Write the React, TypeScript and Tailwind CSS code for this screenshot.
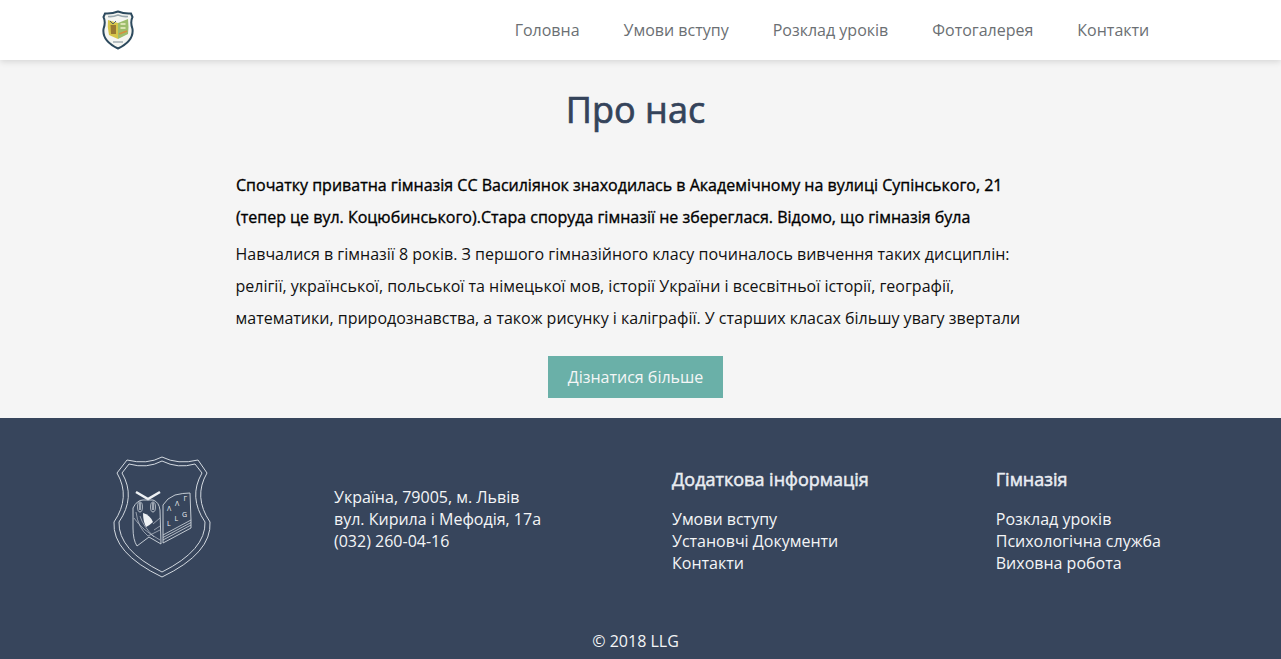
const navItems = ["Головна", "Умови вступу", "Розклад уроків", "Фотогалерея", "Контакти"]

// letters on the open book of the crest, each one sits a bit higher than the last
const bookLetters = [
    { c: "Λ", x: 67, y: 61 },
    { c: "Λ", x: 75, y: 56 },
    { c: "Γ", x: 83.5, y: 51 },
    { c: "L", x: 67, y: 76 },
    { c: "L", x: 74.5, y: 71 },
    { c: "G", x: 82, y: 67 },
]

const SmallLogo = () => (
    <svg width="32" height="40" viewBox="0 0 32 40" className="shrink-0">
        <path d="M3 3.5 Q10 4 16 1.5 Q22 4 29 3.5 L30.5 7 Q28 12 30.5 19 Q32 31 16 38.5 Q0 31 1.5 19 Q4 12 1.5 7 Z" fill="#f5f6f2" stroke="#2d4a5e" strokeWidth="2" />
        <path d="M6 6.5 Q11 7 16 5 Q21 7 26 6.5" fill="none" stroke="#9aa8ae" strokeWidth="1.6" />
        <path d="M6 10 L16 13 L16 29 L7 25 Q5 17 6 10 Z" fill="#d6c64a" />
        <path d="M16 13 L26 9 Q27 17 26 24 L16 29 Z" fill="#9dbd6c" />
        <path d="M8 11 L11 14 L14 11" fill="none" stroke="#53606a" strokeWidth="1" />
        <path d="M8.5 15 h5.5 v9 h-5 z" fill="#9a7a32" />
        <path d="M18.5 14 h5 M18.5 18 h5" stroke="#eef0c8" strokeWidth="1.5" />
        <path d="M17 24 L25 21" stroke="#d88f3e" strokeWidth="1.4" />
        <path d="M11 32 h10" stroke="#8d9aa2" strokeWidth="1.2" />
    </svg>
)

const FooterLogo = () => (
    <svg width="125" height="135" viewBox="0 0 125 135" fill="none" stroke="#d3d9e0" strokeWidth="1" className="shrink-0">
        <path d="M17 23 L27 10 Q47 15 62 7 Q78 15 98 10 L107 23 Q93 47 110 72 Q112 103 62 127 Q12 103 14 72 Q31 47 17 23 Z" />
        <path d="M22 23 L29 14 Q47 19 62 11 Q78 19 95 14 L102 23 Q88 47 105 72 Q106 100 62 122 Q18 100 19 72 Q36 47 22 23 Z" />
        <path d="M36 42 L48 49 L60 42" stroke="#eef1f4" strokeWidth="2.6" />
        <path d="M33 58 Q37 50 43 50 L53 50 Q59 52 60 60 L61 94 L49 87 L37 96 Q33 90 33 78 Z" strokeWidth="0.9" />
        <ellipse cx="40" cy="57" rx="2.4" ry="5" strokeWidth="0.8" />
        <ellipse cx="53" cy="57" rx="2.4" ry="5" strokeWidth="0.8" />
        <path d="M40 53 L40 60 M53 53 L53 60" strokeWidth="1.3" />
        <path d="M43 63 Q50 65 53 72 Q50 75 46 77 Q43 71 43 63 Z" fill="#eef1f4" stroke="none" />
        <path d="M34 68 Q42 80 60 90 M36 62 Q38 78 48 86 M40 66 Q43 76 54 87 M53 74 L60 68 M54 80 L60 76 M48 86 L60 80" strokeWidth="0.6" />
        <path d="M63 55 Q67 48 75 45 Q83 43 90 43 L91 70 L91 78 L63 93 Z" strokeWidth="0.9" />
        <path d="M63 85 L91 70 M63 87.5 L91 72.5 M63 90 L91 75" strokeWidth="0.8" />
        <g fill="#eef1f4" stroke="none" fontFamily="'Open Sans', sans-serif" fontSize="7">
            {bookLetters.map((l, i) => <text key={i} x={l.x} y={l.y}>{l.c}</text>)}
        </g>
    </svg>
)

const FooterColumn = ({ title, links, className }: { title: string, links: string[], className: string }) => (
    <div className={className}>
        <h4 className="text-[18px] leading-[24px] font-normal [-webkit-text-stroke:0.5px_#e9edf2] text-[#e9edf2] mb-[17px]">{title}</h4>
        <div className="flex flex-col text-[#f4f5f7]">
            {links.map(link => <a key={link}>{link}</a>)}
        </div>
    </div>
)

const App = () => {
    return (
        <div className="min-h-[659px] bg-[#f5f5f5] font-['Open_Sans',sans-serif] text-[16px] overflow-hidden">
            <header className="flex items-center justify-between h-[60px] bg-white shadow-[0_2px_6px_rgba(0,0,0,0.12)] pl-[102px] pr-[131.75px] relative">
                <SmallLogo />
                <nav className="flex gap-[44px] text-[#6b6f73]">
                    {navItems.map(item => <a key={item}>{item}</a>)}
                </nav>
            </header>

            <section className="flex flex-col items-center h-[358px] pr-[10px]">
                <h2 className="mt-[26px] text-[36px] leading-[48px] font-normal [-webkit-text-stroke:0.7px_#34435a] text-[#34435a]">Про нас</h2>
                <div className="self-start w-[809px] mt-[35px] ml-[236px] text-black leading-[32px]">
                    <p className="font-normal [-webkit-text-stroke:0.35px_#000] mb-[5px]">
                        Спочатку приватна гімназія СС Василіянок знаходилась в Академічному на вулиці Супінського, 21 (тепер це вул. Коцюбинського).Стара споруда гімназії не збереглася. Відомо, що гімназія була
                    </p>
                    <p className="text-[#111] ml-[-0.5px]">
                        Навчалися в гімназії 8 років. З першого гімназійного класу починалось вивчення таких дисциплін: релігії, української, польської та німецької мов, історії України і всесвітньої історії, географії, математики, природознавства, а також рисунку і каліграфії. У старших класах більшу увагу звертали
                    </p>
                </div>
                <button className="mt-[22px] w-[175px] h-[42px] bg-[#6ab0a8] text-[#f4f6f6]">Дізнатися більше</button>
            </section>

            <footer className="h-[241px] bg-[#37455c] text-[#f4f5f7] leading-[22px]">
                <div className="flex h-[200px]">
                    <div className="ml-[100px] mt-[32px] w-[234px]">
                        <FooterLogo />
                    </div>
                    <div className="w-[338px] mt-[68px]">
                        <p>Україна, 79005, м. Львів</p>
                        <p>вул. Кирила і Мефодія, 17а</p>
                        <p>(032) 260-04-16</p>
                    </div>
                    <FooterColumn className="w-[323.75px] mt-[49px]" title="Додаткова інформація" links={["Умови вступу", "Установчі Документи", "Контакти"]} />
                    <FooterColumn className="mt-[49px]" title="Гімназія" links={["Розклад уроків", "Психологічна служба", "Виховна робота"]} />
                </div>
                <p className="text-center mt-[12px] pr-[10px]">© 2018 LLG</p>
            </footer>
        </div>
    )
}

export default App
